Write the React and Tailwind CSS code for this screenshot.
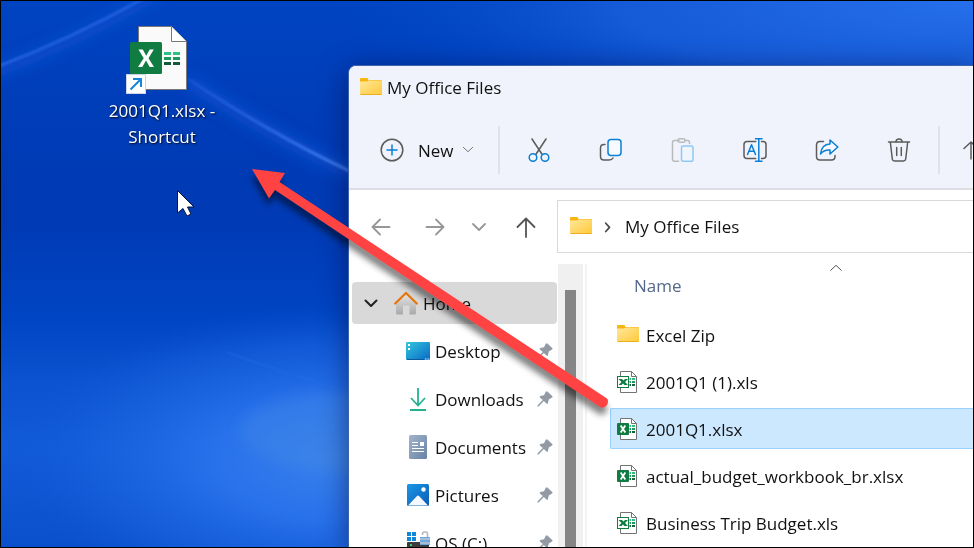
function Folder() {
  return (
    <svg className="h-6 w-6 shrink-0" viewBox="0 0 24 24" aria-hidden="true">
      <defs>
        <linearGradient id="folderFront" x1="0" y1="0" x2="1" y2="1">
          <stop offset="0" stopColor="#ffe79c" />
          <stop offset="1" stopColor="#ffc938" />
        </linearGradient>
      </defs>
      <path d="M1 3 Q1 2 2 2 H8 Q9 2 9 3 L9.500 4 H22 Q23 4 23 5 V12 H1Z" fill="#f8b50f" />
      <path d="M1 5.500 H8 L9.500 4.400 H22 Q23 4.400 23 5.400 V18 Q23 19 22 19 H2 Q1 19 1 18Z" fill="url(#folderFront)" />
      <path d="M1.500 18.500 H22.500" fill="none" stroke="#eeaf1e" strokeWidth="1" />
    </svg>
  );
}

function ExcelFile({ legacy }) {
  return (
    <svg className="h-6 w-6 shrink-0" viewBox="0 0 24 24" aria-hidden="true">
      <path d="M4.500 1.500 H15.500 L20.500 6.500 V22.500 H4.500Z" fill="#fff" stroke="#737373" />
      <path d="M15.500 1.500 V6.500 H20.500" fill="none" stroke="#737373" />
      <g strokeWidth="2">
        <path d="M13.500 9 H15 M16 9 H19" stroke="#2fbf80" />
        <path d="M13.500 12 H15 M16 12 H19" stroke="#1b9a5a" />
        <path d="M13.500 15 H15 M16 15 H19" stroke="#14633c" />
      </g>
      {legacy ? (
        <>
          <rect x="1.500" y="6.500" width="11" height="11" fill="#fff" stroke="#107c41" />
          <path d="M2.500 9 H6 L7.500 10.500 L9 9 H12 L9 12 L12 15 H8.500 L7 13.500 L5.500 15 H2.500 L5.500 12Z" fill="#107c41" />
        </>
      ) : (
        <>
          <rect x="1" y="6" width="12" height="12" rx="1" fill="#107c41" />
          <path d="M4.700 8.500 L9.300 15.500 M9.300 8.500 L4.700 15.500" stroke="#fff" strokeWidth="1.800" />
        </>
      )}
    </svg>
  );
}

function Pin() {
  return (
    <svg className="h-4 w-4 shrink-0" viewBox="0 0 16 16" aria-hidden="true">
      <path d="M8.800 .8 Q9.700 -.2 10.700 .8 L15.200 5 Q16 6 15 6.600 L11.800 8.600 L10.900 12.200 Q10.500 13.400 9.500 12.500 L6.800 10 L1.800 15.200 L.3 15.700 L.6 14.200 L5.800 9 L3 6.400 Q2.200 5.300 3.400 4.900 L7 4.200Z" fill="#929ba3" />
    </svg>
  );
}

function HomeIcon() {
  return (
    <svg className="h-6 w-6 shrink-0" viewBox="0 0 24 24" aria-hidden="true">
      <defs>
        <linearGradient id="houseWall" x1="0" y1="0" x2="0" y2="1">
          <stop offset="0" stopColor="#e4e4e4" />
          <stop offset="1" stopColor="#a9a9ab" />
        </linearGradient>
      </defs>
      <path d="M2 12 L12 3 L22 12 V22 Q22 23.500 20.500 23.500 H15.500 V14.500 H9 V23.500 H3.500 Q2 23.500 2 22Z" fill="url(#houseWall)" />
      <path d="M1.200 12.500 L12 2 L22.800 12.500" fill="none" stroke="#e8750a" strokeWidth="2.200" strokeLinecap="round" strokeLinejoin="round" />
    </svg>
  );
}

function DesktopIcon() {
  return (
    <svg className="h-6 w-6 shrink-0" viewBox="0 0 24 24" aria-hidden="true">
      <defs>
        <linearGradient id="screen" x1="0" y1="0" x2="1" y2="1">
          <stop offset="0" stopColor="#32c8dd" />
          <stop offset="1" stopColor="#0b68c6" />
        </linearGradient>
      </defs>
      <rect x="0" y="3" width="24" height="18" rx="1.200" fill="url(#screen)" />
      <path d="M2 5 H4 V7 H2Z M2 9 H4 V11 H2Z" fill="#fff" />
      <path d="M19 20 H20.500 M21.500 20 H23" stroke="#d8f0ff" />
      <path d="M1 20.500 H18" stroke="#0a5a9c" />
    </svg>
  );
}

function DownloadIcon() {
  return (
    <svg className="h-6 w-6 shrink-0" viewBox="0 0 24 24" aria-hidden="true" fill="none" stroke="#21b391" strokeWidth="1.800">
      <path d="M12 1 V18 M5 11 L12 18.500 L19 11 M4 23 H20" />
    </svg>
  );
}

function DocumentIcon() {
  return (
    <svg className="h-6 w-6 shrink-0" viewBox="0 0 24 24" aria-hidden="true">
      <defs>
        <linearGradient id="paper" x1="0" y1="0" x2="1" y2="1">
          <stop offset="0" stopColor="#a3b4cb" />
          <stop offset="1" stopColor="#6783a6" />
        </linearGradient>
      </defs>
      <rect x="3" y="0" width="18" height="24" rx="1.500" fill="url(#paper)" />
      <path d="M6 7.500 H12 M6 10.500 H12 M6 13.500 H18 M6 16.500 H18" stroke="#fff" strokeWidth="1.200" />
      <rect x="14" y="7" width="4" height="4" fill="#fff" />
    </svg>
  );
}

function PictureIcon() {
  return (
    <svg className="h-6 w-6 shrink-0" viewBox="0 0 24 24" aria-hidden="true">
      <defs>
        <linearGradient id="sky" x1="0" y1="0" x2="1" y2="1">
          <stop offset="0" stopColor="#1b97e6" />
          <stop offset="1" stopColor="#0a5cb4" />
        </linearGradient>
      </defs>
      <rect x="1" y="1" width="22" height="22" rx="1.500" fill="url(#sky)" />
      <path d="M2 22.500 L11 13 Q12 12 13 13 L22 22.500Z" fill="#f5f9fd" />
      <circle cx="17.500" cy="6.500" r="2.200" fill="#fff" />
    </svg>
  );
}

function DriveIcon() {
  return (
    <svg className="h-6 w-6 shrink-0" viewBox="0 0 24 24" aria-hidden="true">
      <path d="M1 1 H5 V5 H1Z M6 1 H10 V5 H6Z M1 6 H5 V10 H1Z M6 6 H10 V10 H6Z" fill="#0f87d8" />
      <rect x="1" y="11" width="22" height="8" rx="1" fill="#3c3c40" />
      <path d="M4 14 H6" stroke="#37d067" strokeWidth="2" />
      <path d="M16.500 4 V3 Q16.500 1 18.500 1 H19.500 Q21.500 1 21.500 3 V6" fill="none" stroke="#b4b8c0" strokeWidth="1.600" />
      <rect x="14" y="6" width="10" height="8" fill="#6ba6dc" />
      <path d="M14 8 H24 M14 12 H24" stroke="#b9c6d3" strokeWidth="1.400" />
    </svg>
  );
}

function Line({ children, className = "h-6 w-6", color = "#5b5b5b", width = 1.5 }) {
  return (
    <svg className={`${className} shrink-0`} viewBox="0 0 24 24" aria-hidden="true" fill="none" stroke={color} strokeWidth={width} strokeLinecap="round" strokeLinejoin="round">
      {children}
    </svg>
  );
}

const BLUE = "#0a7fd6";

const tools = [
  {
    label: "Cut",
    icon: (
      <Line>
        <path d="M5 1 L15.200 16.500 M19 1 L8.800 16.500" />
        <g stroke={BLUE}>
          <circle cx="6" cy="19.500" r="3.800" />
          <circle cx="18" cy="19.500" r="3.800" />
        </g>
      </Line>
    ),
  },
  {
    label: "Copy",
    icon: (
      <Line>
        <path d="M6 6.500 H5 Q1.500 6.500 1.500 10 V18.500 Q1.500 22 5 22 H10 Q13 22 14 20" />
        <rect x="9" y="1.500" width="13" height="16" rx="3" stroke={BLUE} fill="#f8faff" />
      </Line>
    ),
  },
  {
    label: "Paste",
    disabled: true,
    icon: (
      <Line color="#b9babd">
        <path d="M8 2.500 H3.500 Q1.500 2.500 1.500 4.500 V21.500 Q1.500 23.200 3.500 23.200 H7.500 M14 2.500 H16.500 Q18.500 2.500 18.500 4.500 V5.500" />
        <rect x="7" y=".8" width="7" height="3.400" rx="1.600" />
        <rect x="10.500" y="8" width="11.500" height="15.200" rx="1.500" stroke="#92c7f2" fill="#eef5fd" />
      </Line>
    ),
  },
  {
    label: "Rename",
    icon: (
      <Line>
        <path d="M12.800 3.500 H4 Q1 3.500 1 6.500 V17.500 Q1 20.500 4 20.500 H12.800 M18.500 3.500 H20 Q23 3.500 23 6.500 V17.500 Q23 20.500 20 20.500 H18.500" />
        <g stroke={BLUE}>
          <path d="M12.500 .8 H19 M12.500 23.200 H19 M15.800 .8 V23.200" />
          <path d="M4.500 16.500 L8.500 6.800 L12.500 16.500 M5.800 13.300 H11.200" />
        </g>
      </Line>
    ),
  },
  {
    label: "Share",
    icon: (
      <Line>
        <path d="M8.500 3.500 H5 Q1.500 3.500 1.500 7 V18.500 Q1.500 22 5 22 H16.500 Q20 22 20 18.500 V17.500" />
        <path d="M15 2 L22.800 9 L15 16 V12 Q9 11.500 5.500 16 Q6.500 6.500 15 6Z" stroke={BLUE} fill="#f8faff" />
      </Line>
    ),
  },
  {
    label: "Delete",
    icon: (
      <Line>
        <path d="M1.500 4 H22.500 M3.300 4 L5.300 21 Q5.600 23 7.500 23 H16.500 Q18.400 23 18.700 21 L20.700 4" />
        <path d="M9 3.800 Q9 1 12 1 Q15 1 15 3.800 M9.700 9.500 V17.500 M14.300 9.500 V17.500" />
      </Line>
    ),
  },
];

const places = [
  { name: "Desktop", Icon: DesktopIcon },
  { name: "Downloads", Icon: DownloadIcon },
  { name: "Documents", Icon: DocumentIcon },
  { name: "Pictures", Icon: PictureIcon },
  { name: "OS (C:)", Icon: DriveIcon },
];

const files = [
  { name: "Excel Zip", kind: "folder" },
  { name: "2001Q1 (1).xls", kind: "xls" },
  { name: "2001Q1.xlsx", kind: "xlsx", selected: true },
  { name: "actual_budget_workbook_br.xlsx", kind: "xlsx" },
  { name: "Business Trip Budget.xls", kind: "xls" },
];

function Wallpaper() {
  return (
    <svg className="absolute inset-0 h-full w-full" viewBox="0 0 974 548" preserveAspectRatio="none" aria-hidden="true">
      <defs>
        <linearGradient id="base" x1="0" y1="0" x2="0" y2="1">
          <stop offset="0" stopColor="#0044c2" />
          <stop offset=".2" stopColor="#003db8" />
          <stop offset=".4" stopColor="#003ab4" />
          <stop offset=".58" stopColor="#0045c4" />
          <stop offset=".7" stopColor="#0b53d0" />
          <stop offset=".82" stopColor="#115ad8" />
          <stop offset="1" stopColor="#0a50cc" />
        </linearGradient>
        <radialGradient id="glow">
          <stop offset="0" stopColor="#3a82ec" />
          <stop offset=".4" stopColor="#2973ec" stopOpacity=".95" />
          <stop offset=".75" stopColor="#1c66e2" stopOpacity=".5" />
          <stop offset="1" stopColor="#0f58d6" stopOpacity="0" />
        </radialGradient>
        <radialGradient id="corner">
          <stop offset="0" stopColor="#2670ec" />
          <stop offset=".55" stopColor="#1a60dc" stopOpacity=".8" />
          <stop offset="1" stopColor="#0048c6" stopOpacity="0" />
        </radialGradient>
        <linearGradient id="streak" gradientUnits="userSpaceOnUse" x1="187" y1="78" x2="350" y2="171">
          <stop offset="0" stopColor="#2b68e6" stopOpacity=".4" />
          <stop offset="1" stopColor="#4583f4" />
        </linearGradient>
        <filter id="soft1" x="-20%" y="-20%" width="140%" height="140%"><feGaussianBlur stdDeviation="1.200" /></filter>
        <filter id="soft2" x="-20%" y="-40%" width="140%" height="180%"><feGaussianBlur stdDeviation="7" /></filter>
      </defs>
      <rect width="974" height="548" fill="url(#base)" />
      <ellipse cx="350" cy="460" rx="340" ry="155" fill="url(#glow)" />
      <ellipse cx="350" cy="432" rx="110" ry="40" fill="#478be4" opacity=".35" filter="url(#soft2)" />
      <ellipse cx="974" cy="0" rx="650" ry="150" fill="url(#corner)" />
      <g fill="none" filter="url(#soft2)">
        <path d="M-20 76 Q70 45 160 -10" stroke="#1458d8" strokeWidth="12" opacity=".6" />
        <path d="M187 80 Q270 135 350 172" stroke="#1458d8" strokeWidth="14" opacity=".6" />
      </g>
      <g fill="none" filter="url(#soft1)">
        <path d="M-4 66 Q70 38 142 -2" stroke="#2866e6" strokeWidth="3" opacity=".8" />
        <path d="M187 78 Q270 133 350 171" stroke="url(#streak)" strokeWidth="3" />
        <path d="M225 352 Q290 376 350 392" stroke="#2a70ea" strokeWidth="2" opacity=".4" />
      </g>
    </svg>
  );
}

function Shortcut() {
  return (
    <button className="absolute top-6 left-[90px] flex w-[142px] flex-col items-center leading-[26px] text-white">
      <svg className="mr-[14px] h-[72px] w-[72px]" viewBox="0 0 72 72" aria-hidden="true">
        <path d="M19.500 1.500 H52.500 L67.500 16.500 V64.500 H19.500Z" fill="#fafafa" stroke="#777" />
        <path d="M52.500 1.500 V16.500 H67.500" fill="#fff" stroke="#777" />
        <g strokeWidth="3">
          <path d="M45 28.500 H52 M54 28.500 H61" stroke="#2dc183" />
          <path d="M45 33.500 H52 M54 33.500 H61" stroke="#1a9a5b" />
          <path d="M45 38.500 H52 M54 38.500 H61" stroke="#14593a" />
        </g>
        <rect x="11" y="17" width="32" height="32" rx="1.500" fill="#107c41" />
        <path d="M19.500 24.500 H23.800 L27.200 30.800 L30.700 24.500 H34.800 L29.500 33.200 L35 42 H30.700 L27 35.400 L23.300 42 H19 L24.700 33.200Z" fill="#fff" />
        <rect x="7.500" y="49.500" width="19" height="19" fill="#fff" stroke="#c9d3ea" />
        <path d="M11.500 64.500 L21.500 54.500 M14 54 H22 V62" fill="none" stroke="#1485d8" strokeWidth="2" />
      </svg>
      <span className="pt-[1px] [text-shadow:1px_1px_2px_rgba(0,0,0,0.9)]">
        2001Q1.xlsx -<br />Shortcut
      </span>
    </button>
  );
}

function Explorer() {
  return (
    <main className="absolute top-16 right-0 bottom-0 left-[347px] flex flex-col overflow-hidden rounded-tl-lg border-t border-l border-[#3c62ac] bg-white shadow-[0_6px_28px_rgba(0,10,60,0.55)]">
      <header className="shrink-0 border-b-2 border-[#dddde4] bg-[#f0f3fb]">
        <div className="flex h-11 items-center gap-1 pl-[10px]">
          <Folder />
          <h1>My Office Files</h1>
        </div>
        <div className="flex h-[78px] items-center overflow-hidden pt-[2px]">
          <button className="flex w-[149px] shrink-0 items-center pl-[31px]">
            <Line>
              <circle cx="12" cy="12" r="10.800" />
              <path d="M12 7 V17 M7 12 H17" stroke={BLUE} />
            </Line>
            <span className="ml-[14px] pt-[2px]">New</span>
            <Line className="ml-[6px] h-4 w-4" color="#777">
              <path d="M5 8 L12 14.500 L19 8" />
            </Line>
          </button>
          <span className="mr-[3px] h-12 w-[2px] shrink-0 bg-[#dfe2ea]" />
          {tools.map((t) => (
            <button key={t.label} aria-label={t.label} disabled={t.disabled} className="flex h-12 w-[72px] shrink-0 items-center justify-center">
              {t.icon}
            </button>
          ))}
          <span className="ml-[3px] h-12 w-[2px] shrink-0 bg-[#dfe2ea]" />
          <button aria-label="Sort" className="ml-5 shrink-0">
            <Line>
              <path d="M11 21 V4 M4 10.500 L11 4 L18 10.500" />
            </Line>
          </button>
        </div>
      </header>

      <nav className="flex h-[74px] shrink-0 items-center pb-[1px]" aria-label="Location">
        <div className="flex w-[208px] shrink-0 items-center pl-5">
          <button aria-label="Back" className="mr-[30px]">
            <Line color="#979797" width={1.8}><path d="M20.500 12 H4 M11 4.500 L3.500 12 L11 19.500" /></Line>
          </button>
          <button aria-label="Forward" className="mr-5">
            <Line color="#979797" width={1.8}><path d="M3.500 12 H20 M13 4.500 L20.500 12 L13 19.500" /></Line>
          </button>
          <button aria-label="Recent locations" className="mr-[23px]">
            <Line color="#979797" width={1.8}><path d="M6 9 L12 15 L18 9" /></Line>
          </button>
          <button aria-label="Up">
            <Line color="#555" width={1.8}><path d="M12 22 V3.500 M3.500 12 L12 3.500 L20.500 12" /></Line>
          </button>
        </div>
        <div className="flex h-[53px] min-w-0 flex-1 items-center border border-r-0 border-[#d9d9d9] pl-[11px]">
          <Folder />
          <Line className="mr-2 ml-[6px] h-[18px] w-[18px]" color="#4d4d4d" width={2.4}>
            <path d="M9 7 L14 12.500 L9 18" />
          </Line>
          <a href="#files">My Office Files</a>
        </div>
      </nav>

      <div className="flex min-h-0 flex-1">
        <aside className="w-[209px] shrink-0 overflow-hidden pt-[18px] pl-[3px]">
          <ul className="flex flex-col gap-[6px]">
            <li>
              <a href="#home" className="mr-[1px] flex h-[42px] items-center rounded-sm bg-[#d9d9d9] pl-[7px]">
                <Line color="#222" width={2}><path d="M6.500 9.500 L12 15 L17.500 9.500" /></Line>
                <span className="mr-[5px] ml-[11px]"><HomeIcon /></span>
                <span className="pt-[2px]">Home</span>
              </a>
            </li>
            {places.map(({ name, Icon }) => (
              <li key={name}>
                <a href={`#${name}`} className="flex h-[42px] items-center gap-[5px] pr-[5px] pl-[54px]">
                  <Icon />
                  <span className="flex-1 pt-[2px]">{name}</span>
                  <Pin />
                </a>
              </li>
            ))}
          </ul>
        </aside>
        <div className="w-[25px] shrink-0 bg-[#f0f0f0] pt-[26px] pl-[7px]">
          <div className="h-full w-[11px] bg-[#858585]" />
        </div>
        <div className="ml-[2px] w-[2px] shrink-0 bg-[#f3f3f3]" />
        <section id="files" className="min-w-0 flex-1 overflow-hidden pl-[23px]">
          <table className="w-full border-collapse">
            <thead>
              <tr>
                <th className="relative h-[47px] p-0 pb-1 pl-6 text-left font-normal text-[#54698a]">
                  Name
                  <Line className="absolute top-[-4px] left-[218px] h-4 w-4" color="#555">
                    <path d="M4 15.500 L12 8 L20 15.500" />
                  </Line>
                </th>
              </tr>
            </thead>
            <tbody>
              {files.map((f) => (
                <tr key={f.name}>
                  <td className="h-[47px] p-0">
                    <div className={`flex h-[41px] items-center gap-[6px] rounded-l-xs border border-r-0 pl-[5px] ${f.selected ? "border-[#99d1ff] bg-[#cce8ff]" : "border-transparent"}`}>
                      {f.kind === "folder" ? <Folder /> : <ExcelFile legacy={f.kind === "xls"} />}
                      <span className="pt-[2px] whitespace-nowrap">{f.name}</span>
                    </div>
                  </td>
                </tr>
              ))}
            </tbody>
          </table>
        </section>
      </div>
    </main>
  );
}

function DragArrow() {
  return (
    <svg className="pointer-events-none absolute top-0 left-0 h-[548px] w-[974px] drop-shadow-[-1px_7px_3px_rgba(0,0,0,0.5)]" viewBox="1 1 974 548" aria-hidden="true">
      <path d="M252 169 L285 173 L279.500 182 L607 398.500 Q609 401 607 405 Q604 409 600 407 L275 190 L269 198.500Z" fill="#ff4343" />
    </svg>
  );
}

function Pointer() {
  return (
    <svg className="absolute top-[188px] left-[175px] h-7 w-5" viewBox="0 0 20 28" aria-hidden="true">
      <path d="M1.500 1.500 V24 L7 19.500 L11 27 L15 25 L11.500 18 H18Z" fill="#fff" stroke="#06133c" strokeWidth="1" />
    </svg>
  );
}

export default function App() {
  return (
    <div className="relative h-screen w-full overflow-hidden border border-black bg-[#003cb6] font-['Open_Sans','Noto_Sans',sans-serif] text-[17px] leading-6 text-[#111]">
      <Wallpaper />
      <Shortcut />
      <Explorer />
      <DragArrow />
      <Pointer />
    </div>
  );
}
